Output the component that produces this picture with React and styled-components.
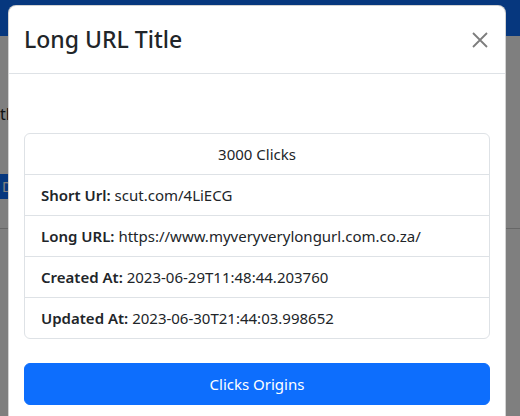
import React from "react";
import styled, { createGlobalStyle } from "styled-components";

const Global = createGlobalStyle`
  html, body { margin: 0; padding: 0; }
  body {
    font-family: "Noto Sans", "Open Sans", sans-serif;
    font-size: 16px;
    line-height: 1.5;
    color: #212529;
    background: #fff;
  }
  * { box-sizing: border-box; }
`;

const Viewport = styled.div`
  position: relative;
  width: 520px;
  height: 416px;
  overflow: hidden;
  background: #fff;
`;

const Navbar = styled.div`
  height: 36px;
  background: #0d6efd;
`;

const PageMain = styled.div`
  display: flex;
  flex-direction: column;
`;

const PageHeading = styled.div`
  margin-top: 66px;
  font-size: 16px;
  line-height: 24px;
  color: #212529;
  white-space: nowrap;
`;

const PageButton = styled.div`
  margin-top: 48px;
  width: 120px;
  height: 25px;
  background: #0d6efd;
  color: #fff;
  font-size: 14px;
  line-height: 25px;
  padding-left: 2px;
`;

const PageRule = styled.div`
  margin-top: 29px;
  height: 1px;
  background: #cfcfcf;
`;

const Backdrop = styled.div`
  position: absolute;
  inset: 0;
  background: rgba(0, 0, 0, 0.5);
`;

const Modal = styled.div`
  position: absolute;
  left: 8px;
  top: 5px;
  width: 498px;
  height: 440px;
  background: #fff;
  border: 1px solid rgba(0, 0, 0, 0.175);
  border-radius: 8px;
  display: flex;
  flex-direction: column;
`;

const Header = styled.div`
  display: flex;
  align-items: center;
  justify-content: space-between;
  height: 68px;
  padding: 0 15px;
  border-bottom: 1px solid #dee2e6;
`;

const Title = styled.h4`
  margin: 0 0 2px;
  font-size: 23px;
  font-weight: 500;
  line-height: 36px;
  color: #212529;
`;

const CloseButton = styled.button`
  border: 0;
  background: transparent;
  padding: 0;
  width: 18px;
  height: 18px;
  display: flex;
  align-items: center;
  justify-content: center;
  margin-right: 1px;
  cursor: pointer;
`;

const Body = styled.div`
  padding: 59px 15px 16px;
  display: flex;
  flex-direction: column;
`;

const List = styled.ul`
  list-style: none;
  margin: 0;
  padding: 0;
  border: 1px solid #dee2e6;
  border-radius: 6px;
`;

const Item = styled.li`
  padding: 8px 16px;
  line-height: 24px;
  font-size: 15px;
  text-align: ${(p) => (p.$center ? "center" : "left")};
  white-space: nowrap;
  & + & {
    border-top: 1px solid #dee2e6;
  }
`;

const Label = styled.strong`
  font-weight: 600;
`;

const PrimaryButton = styled.button`
  margin-top: 24px;
  height: 42px;
  width: 100%;
  border: 1px solid #0d6efd;
  border-radius: 6px;
  background: #0d6efd;
  color: #fff;
  font-family: inherit;
  font-size: 15px;
  line-height: 24px;
`;

const rows = [
  ["Short Url:", "scut.com/4LiECG"],
  ["Long URL:", "https://www.myveryverylongurl.com.co.za/"],
  ["Created At:", "2023-06-29T11:48:44.203760"],
  ["Updated At:", "2023-06-30T21:44:03.998652"],
];

export default function App() {
  return (
    <>
      <Global />
      <Viewport>
        <Navbar />
        <PageMain>
          <PageHeading>th</PageHeading>
          <PageButton>D</PageButton>
          <PageRule />
        </PageMain>
        <Backdrop />
        <Modal>
          <Header>
            <Title>Long URL Title</Title>
            <CloseButton aria-label="Close">
              <svg width="16" height="16" viewBox="0 0 16 16">
                <path d="M1 1L15 15M15 1L1 15" stroke="#7d7d7d" strokeWidth="1.8" fill="none" />
              </svg>
            </CloseButton>
          </Header>
          <Body>
            <List>
              <Item $center>3000 Clicks</Item>
              {rows.map(([k, v]) => (
                <Item key={k}>
                  <Label>{k}</Label> {v}
                </Item>
              ))}
            </List>
            <PrimaryButton>Clicks Origins</PrimaryButton>
          </Body>
        </Modal>
      </Viewport>
    </>
  );
}
